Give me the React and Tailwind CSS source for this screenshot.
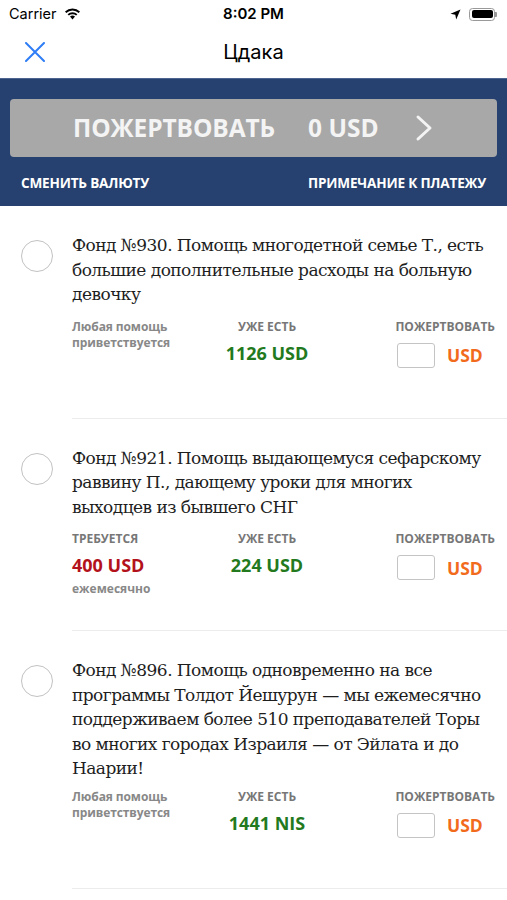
import React from "react";

const sans = { fontFamily: '"Open Sans", "Noto Sans", sans-serif' };

function Item({ lines, left, have, tight }) {
  return (
    <div className="flex pt-[27px]">
      <div className="w-[72px] shrink-0 pl-[21px] pt-[7px]">
        <div className="w-[32px] h-[32px] rounded-full border border-[#c2c2c2]" />
      </div>
      <div className="flex-1 border-b border-[#ececec]">
        <div className="text-[17px] leading-[24.5px] text-[#1e1e1e] font-['DejaVu_Serif',serif] tracking-[-0.55px] pr-[12px]">
          {lines.map((l, i) => (
            <div key={i} className="whitespace-nowrap">{l}</div>
          ))}
        </div>
        <div className={(tight ? "mt-[8px] " : "mt-[12px] ") + "flex h-[99px] font-['Open_Sans',sans-serif] pr-[12px]"}>
          <div className="w-[130px]">{left}</div>
          <div className="w-[130px] flex flex-col items-center">
            <div className="text-[12px] leading-[16px] font-bold text-[#777]">УЖЕ ЕСТЬ</div>
            <div className="text-[18px] leading-[22px] font-bold text-[#237a1e] mt-[7px]">{have}</div>
          </div>
          <div className="ml-auto flex flex-col items-end">
            <div className="text-[12px] leading-[16px] font-bold text-[#777]">ПОЖЕРТВОВАТЬ</div>
            <div className="flex items-center mt-[8px] w-[100px]">
              <div className="w-[38px] h-[25px] rounded-[3px] border border-[#c4c4c4] bg-white ml-[2px]" />
              <div className="ml-[12px] text-[17.5px] font-bold text-[#f26b1d] leading-[22px]">USD</div>
            </div>
          </div>
        </div>
      </div>
    </div>
  );
}

const anyHelp = (
  <div className="text-[12px] leading-[16px] font-bold text-[#888] tracking-[-0.1px]">
    Любая помощь
    <br />
    приветствуется
  </div>
);

export default function App() {
  return (
    <div className="w-[507px] h-[900px] bg-white overflow-hidden relative" style={sans}>
      {/* status bar */}
      <div className="h-[28px] flex items-center px-[9px] font-['Inter',sans-serif] text-black relative">
        <span className="text-[14.5px]">Carrier</span>
        <svg className="ml-[7px]" width="17" height="12" viewBox="0 0 17 12">
          <path d="M8.5 11.5 L6 8.6 A3.8 3.8 0 0 1 11 8.6 Z" fill="#000" />
          <path d="M3.6 6.2 A7.2 7.2 0 0 1 13.4 6.2 L12.1 7.6 A5.3 5.3 0 0 0 4.9 7.6 Z" fill="#000" />
          <path d="M1 3.6 A10.8 10.8 0 0 1 16 3.6 L14.7 5 A8.9 8.9 0 0 0 2.3 5 Z" fill="#000" />
        </svg>
        <span className="absolute left-0 right-0 text-center text-[15px] font-semibold">8:02 PM</span>
        <div className="ml-auto flex items-center gap-[8px] mr-[1px]">
          <svg width="11" height="11" viewBox="0 0 11 11">
            <path d="M10.5 0.5 L0.5 4.8 L5.3 5.7 L6.2 10.5 Z" fill="#000" />
          </svg>
          <div className="flex items-center">
            <div className="w-[26px] h-[13px] rounded-[3.5px] border border-[#999] p-[1.5px]">
              <div className="w-full h-full bg-black rounded-[2px]" />
            </div>
            <div className="w-[2px] h-[5px] bg-[#999] rounded-r-[1px]" />
          </div>
        </div>
      </div>
      {/* nav bar */}
      <div className="h-[50px] relative flex items-center justify-center">
        <svg className="absolute left-[25px] top-[14px]" width="20" height="20" viewBox="0 0 20 20">
          <path d="M1 1 L19 19 M19 1 L1 19" stroke="#2f7df6" strokeWidth="2" strokeLinecap="round" />
        </svg>
        <span className="text-[20px] text-black font-['Inter',sans-serif] mt-[-2px]">Цдака</span>
      </div>
      {/* blue header */}
      <div className="bg-[#26416f] border-t border-[#4c6590] h-[128px] px-[10px] pt-[20px]">
        <div className="h-[58px] rounded-[4px] bg-[#a8a8a8] flex items-center text-[#f4f4f4] font-bold">
          <span className="ml-[63px] text-[24.5px] tracking-[-0.1px]">ПОЖЕРТВОВАТЬ</span>
          <span className="ml-[33px] text-[24.5px]">0 USD</span>
          <svg className="ml-[36px]" width="18" height="28" viewBox="0 0 18 28">
            <path d="M3 3 L15 14 L3 25" stroke="#f4f4f4" strokeWidth="3" fill="none" strokeLinecap="round" strokeLinejoin="round" />
          </svg>
        </div>
        <div className="flex justify-between mt-[16px] px-[11px] text-white text-[13.6px] font-bold tracking-[-0.2px]">
          <span>СМЕНИТЬ ВАЛЮТУ</span>
          <span>ПРИМЕЧАНИЕ К ПЛАТЕЖУ</span>
        </div>
      </div>
      {/* list */}
      <Item
        lines={[
          "Фонд №930. Помощь многодетной семье Т., есть",
          "большие дополнительные расходы на больную",
          "девочку",
        ]}
        left={anyHelp}
        have="1126 USD"
      />
      <Item
        lines={[
          "Фонд №921. Помощь выдающемуся сефарскому",
          "раввину П., дающему уроки для многих",
          "выходцев из бывшего СНГ",
        ]}
        left={
          <div>
            <div className="text-[12px] leading-[16px] font-bold text-[#777]">ТРЕБУЕТСЯ</div>
            <div className="text-[18px] leading-[22px] font-bold text-[#b3121c] mt-[7px]">400 USD</div>
            <div className="text-[12px] leading-[16px] font-bold text-[#888] mt-[5px]">ежемесячно</div>
          </div>
        }
        have="224 USD"
      />
      <Item
        lines={[
          "Фонд №896. Помощь одновременно на все",
          "программы Толдот Йешурун — мы ежемесячно",
          "поддерживаем более 510 преподавателей Торы",
          "во многих городах Израиля — от Эйлата и до",
          "Наарии!",
        ]}
        left={anyHelp}
        have="1441 NIS"
        tight
      />
    </div>
  );
}
